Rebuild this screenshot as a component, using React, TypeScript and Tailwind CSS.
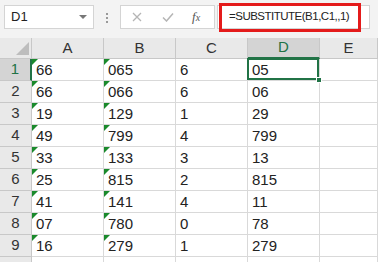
import React from 'react'

const rows: [string, string, string, string][] = [
  ['66', '065', '6', '05'],
  ['66', '066', '6', '06'],
  ['19', '129', '1', '29'],
  ['49', '799', '4', '799'],
  ['33', '133', '3', '13'],
  ['25', '815', '2', '815'],
  ['41', '141', '4', '11'],
  ['07', '780', '0', '78'],
  ['16', '279', '1', '279'],
]

const cols = ['A', 'B', 'C', 'D', 'E']

function Flag() {
  return (
    <span className="absolute left-0 top-0 h-0 w-0 border-r-[6px] border-t-[6px] border-r-transparent border-t-[#1a8a2c]" />
  )
}

function Cell({ value, flag, selected }: { value?: string; flag?: boolean; selected?: boolean }) {
  return (
    <div className="relative flex h-[22px] items-center border-b border-r border-[#d9d9d9] bg-white pl-[4px] pt-px text-[15px] text-[#222]">
      {flag && <Flag />}
      {value}
      {selected && (
        <>
          <span className="absolute -left-px -top-px bottom-0 right-0 border-2 border-[#217346]" />
          <span className="absolute -bottom-[3px] -right-[3px] z-10 h-[6px] w-[6px] border border-white bg-[#217346]" />
        </>
      )}
    </div>
  )
}

export default function App() {
  return (
    <div className="h-[262px] w-[378px] overflow-hidden bg-white" style={{ fontFamily: '"Liberation Sans", Arial, sans-serif' }}>
      {/* formula bar */}
      <div className="relative flex h-[38px] items-start bg-[#f3f3f3] pt-[5px]">
        <div className="ml-[4px] flex h-[24px] w-[90px] items-center justify-between border border-[#d4d4d4] bg-white pl-[6px] pr-[6px] text-[13px] text-[#222]">
          <span>D1</span>
          <span className="h-0 w-0 border-l-[4px] border-r-[4px] border-t-[4px] border-l-transparent border-r-transparent border-t-[#777]" />
        </div>
        <div className="ml-[12px] mt-[8px] flex flex-col gap-[2px]">
          <span className="h-[2px] w-[2px] bg-[#999]" />
          <span className="h-[2px] w-[2px] bg-[#999]" />
          <span className="h-[2px] w-[2px] bg-[#999]" />
        </div>
        <div className="ml-[12px] flex h-[24px] w-[95px] items-center border border-[#d4d4d4] bg-white text-[#b5b5b5]">
          <svg width="10" height="10" viewBox="0 0 10 10" className="ml-[11px]">
            <path d="M1 1 L9 9 M9 1 L1 9" stroke="#b5b5b5" strokeWidth="1.3" />
          </svg>
          <svg width="12" height="10" viewBox="0 0 12 10" className="ml-[20px]">
            <path d="M1 5.5 L4.5 9 L11 1.5" stroke="#b5b5b5" strokeWidth="1.5" fill="none" />
          </svg>
          <span className="ml-[18px] text-[13px] italic text-[#555]" style={{ fontFamily: '"Liberation Serif", serif' }}>
            f<span className="text-[10px]">x</span>
          </span>
        </div>
        <div className="ml-[2px] flex h-[24px] w-[153px] items-center border border-[#d4d4d4] bg-white pl-[11px] text-[11.5px] tracking-[-0.5px] text-[#222]">
          =SUBSTITUTE(B1,C1,,1)
        </div>
        <span className="pointer-events-none absolute left-[219px] top-[3px] h-[29px] w-[142px] border-[3px] border-[#e41b1b]" />
      </div>

      {/* sheet */}
      <div className="grid grid-cols-[32px_72px_72px_72px_72px_1fr]">
        <div className="relative h-[21px] border-b border-r border-[#c8c8c8] bg-[#e9e9e9]">
          <span className="absolute bottom-[3px] right-[2px] h-0 w-0 border-b-[13px] border-l-[13px] border-b-[#bdbdbd] border-l-transparent" />
        </div>
        {cols.map((c) => (
          <div
            key={c}
            className={
              c === 'D'
                ? 'flex h-[21px] items-center justify-center border-b-2 border-r border-b-[#217346] border-r-[#c8c8c8] bg-[#d4d4d4] text-[15px] text-[#217346]'
                : 'flex h-[21px] items-center justify-center border-b border-r border-[#c8c8c8] bg-[#e9e9e9] text-[15px] text-[#333]'
            }
          >
            {c}
          </div>
        ))}

        {rows.map((r, i) => (
          <React.Fragment key={i}>
            <div
              className={
                i === 0
                  ? 'flex h-[22px] items-center justify-center border-b border-r-2 border-b-[#c8c8c8] border-r-[#217346] bg-[#d4d4d4] text-[15px] text-[#217346]'
                  : 'flex h-[22px] items-center justify-center border-b border-r border-[#c8c8c8] bg-[#e9e9e9] text-[15px] text-[#333]'
              }
            >
              {i + 1}
            </div>
            <Cell value={r[0]} flag />
            <Cell value={r[1]} flag />
            <Cell value={r[2]} />
            <Cell value={r[3]} selected={i === 0} />
            <Cell />
          </React.Fragment>
        ))}
        <div className="h-[22px] border-r border-[#c8c8c8] bg-[#e9e9e9]" />
        <Cell />
        <Cell />
        <Cell />
        <Cell />
        <Cell />
      </div>
    </div>
  )
}
